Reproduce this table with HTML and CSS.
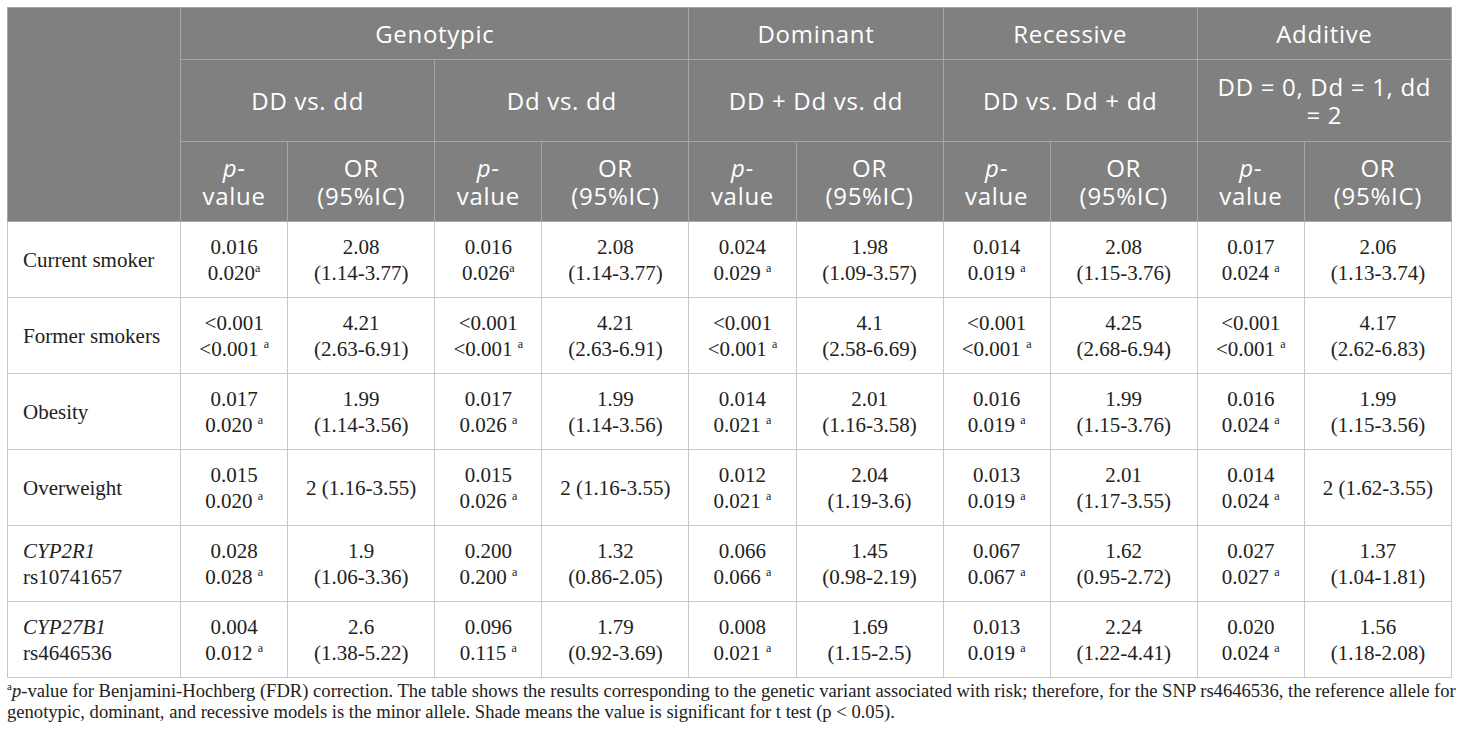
FILE: index.html
```html
<!DOCTYPE html>
<html lang="en">
<head>
  <meta charset="UTF-8" />
  <title>Genetic models table</title>
  <link rel="stylesheet" href="styles.css">
</head>
<body>
  <table class="results">
    <colgroup>
      <col class="c-label">
      <col class="c-p"><col class="c-or">
      <col class="c-p"><col class="c-or">
      <col class="c-p"><col class="c-or">
      <col class="c-p"><col class="c-or">
      <col class="c-p"><col class="c-or">
    </colgroup>
    <thead>
      <tr class="h1">
        <th rowspan="3"></th>
        <th colspan="4">Genotypic</th>
        <th colspan="2">Dominant</th>
        <th colspan="2">Recessive</th>
        <th colspan="2">Additive</th>
      </tr>
      <tr class="h2">
        <th colspan="2">DD vs. dd</th>
        <th colspan="2">Dd vs. dd</th>
        <th colspan="2">DD + Dd vs. dd</th>
        <th colspan="2">DD vs. Dd + dd</th>
        <th colspan="2">DD = 0, Dd = 1, dd<br>= 2</th>
      </tr>
      <tr class="h3">
        <th><i>p</i>-<br>value</th><th>OR<br>(95%IC)</th>
        <th><i>p</i>-<br>value</th><th>OR<br>(95%IC)</th>
        <th><i>p</i>-<br>value</th><th>OR<br>(95%IC)</th>
        <th><i>p</i>-<br>value</th><th>OR<br>(95%IC)</th>
        <th><i>p</i>-<br>value</th><th>OR<br>(95%IC)</th>
      </tr>
    </thead>
    <tbody>
      <tr>
        <td class="label">Current smoker</td>
        <td>0.016<br>0.020<sup>a</sup></td><td>2.08<br>(1.14-3.77)</td>
        <td>0.016<br>0.026<sup>a</sup></td><td>2.08<br>(1.14-3.77)</td>
        <td>0.024<br>0.029 <sup>a</sup></td><td>1.98<br>(1.09-3.57)</td>
        <td>0.014<br>0.019 <sup>a</sup></td><td>2.08<br>(1.15-3.76)</td>
        <td>0.017<br>0.024 <sup>a</sup></td><td>2.06<br>(1.13-3.74)</td>
      </tr>
      <tr>
        <td class="label">Former smokers</td>
        <td>&lt;0.001<br>&lt;0.001 <sup>a</sup></td><td>4.21<br>(2.63-6.91)</td>
        <td>&lt;0.001<br>&lt;0.001 <sup>a</sup></td><td>4.21<br>(2.63-6.91)</td>
        <td>&lt;0.001<br>&lt;0.001 <sup>a</sup></td><td>4.1<br>(2.58-6.69)</td>
        <td>&lt;0.001<br>&lt;0.001 <sup>a</sup></td><td>4.25<br>(2.68-6.94)</td>
        <td>&lt;0.001<br>&lt;0.001 <sup>a</sup></td><td>4.17<br>(2.62-6.83)</td>
      </tr>
      <tr>
        <td class="label">Obesity</td>
        <td>0.017<br>0.020 <sup>a</sup></td><td>1.99<br>(1.14-3.56)</td>
        <td>0.017<br>0.026 <sup>a</sup></td><td>1.99<br>(1.14-3.56)</td>
        <td>0.014<br>0.021 <sup>a</sup></td><td>2.01<br>(1.16-3.58)</td>
        <td>0.016<br>0.019 <sup>a</sup></td><td>1.99<br>(1.15-3.76)</td>
        <td>0.016<br>0.024 <sup>a</sup></td><td>1.99<br>(1.15-3.56)</td>
      </tr>
      <tr>
        <td class="label">Overweight</td>
        <td>0.015<br>0.020 <sup>a</sup></td><td>2 (1.16-3.55)</td>
        <td>0.015<br>0.026 <sup>a</sup></td><td>2 (1.16-3.55)</td>
        <td>0.012<br>0.021 <sup>a</sup></td><td>2.04<br>(1.19-3.6)</td>
        <td>0.013<br>0.019 <sup>a</sup></td><td>2.01<br>(1.17-3.55)</td>
        <td>0.014<br>0.024 <sup>a</sup></td><td>2 (1.62-3.55)</td>
      </tr>
      <tr>
        <td class="label"><i>CYP2R1</i><br>rs10741657</td>
        <td>0.028<br>0.028 <sup>a</sup></td><td>1.9<br>(1.06-3.36)</td>
        <td>0.200<br>0.200 <sup>a</sup></td><td>1.32<br>(0.86-2.05)</td>
        <td>0.066<br>0.066 <sup>a</sup></td><td>1.45<br>(0.98-2.19)</td>
        <td>0.067<br>0.067 <sup>a</sup></td><td>1.62<br>(0.95-2.72)</td>
        <td>0.027<br>0.027 <sup>a</sup></td><td>1.37<br>(1.04-1.81)</td>
      </tr>
      <tr>
        <td class="label"><i>CYP27B1</i><br>rs4646536</td>
        <td>0.004<br>0.012 <sup>a</sup></td><td>2.6<br>(1.38-5.22)</td>
        <td>0.096<br>0.115 <sup>a</sup></td><td>1.79<br>(0.92-3.69)</td>
        <td>0.008<br>0.021 <sup>a</sup></td><td>1.69<br>(1.15-2.5)</td>
        <td>0.013<br>0.019 <sup>a</sup></td><td>2.24<br>(1.22-4.41)</td>
        <td>0.020<br>0.024 <sup>a</sup></td><td>1.56<br>(1.18-2.08)</td>
      </tr>
    </tbody>
  </table>
  <p class="footnote">
    <sup>a</sup><i>p</i>-value for Benjamini-Hochberg (FDR) correction. The table shows the results corresponding to the genetic variant associated with risk; therefore, for the SNP rs4646536, the reference allele for genotypic, dominant, and recessive models is the minor allele. Shade means the value is significant for t test (p &lt; 0.05).
  </p>
</body>
</html>
```

FILE: styles.css
```css
body {
  margin: 0;
  padding: 7px 0 0 7px;
  background: #ffffff;
  color: #222222;
  font-family: "Liberation Serif", "Times New Roman", serif;
}
.results {
  width: 1445px;
  border-collapse: collapse;
  table-layout: fixed;
}
.c-label { width: 173px; }
.c-p { width: 107px; }
.c-or { width: 147px; }
th {
  background-color: #808080;
  color: #ffffff;
  font-family: "Open Sans", "Noto Sans", sans-serif;
  font-weight: normal;
  font-size: 24px;
  letter-spacing: 0.7px;
  line-height: 28px;
  text-align: center;
  border: 1px solid #a6a6a6;
  padding: 0 2px;
}
th i {
  font-style: italic;
}
.h1 th { height: 51px; }
.h2 th { height: 81px; }
.h3 th { height: 79px; }
td {
  border: 1px solid #c8c8c8;
  text-align: center;
  font-size: 21px;
  line-height: 26px;
  height: 75px;
  padding: 0 4px;
}
td.label {
  text-align: left;
  padding-left: 15px;
}
sup {
  font-size: 12px;
  line-height: 0;
  vertical-align: 8px;
}
.footnote {
  margin: 2px 0 0;
  font-size: 18.6px;
  line-height: 21px;
  color: #222222;
  width: 1453px;
}
.footnote sup {
  font-size: 11px;
  vertical-align: 7px;
}
```
